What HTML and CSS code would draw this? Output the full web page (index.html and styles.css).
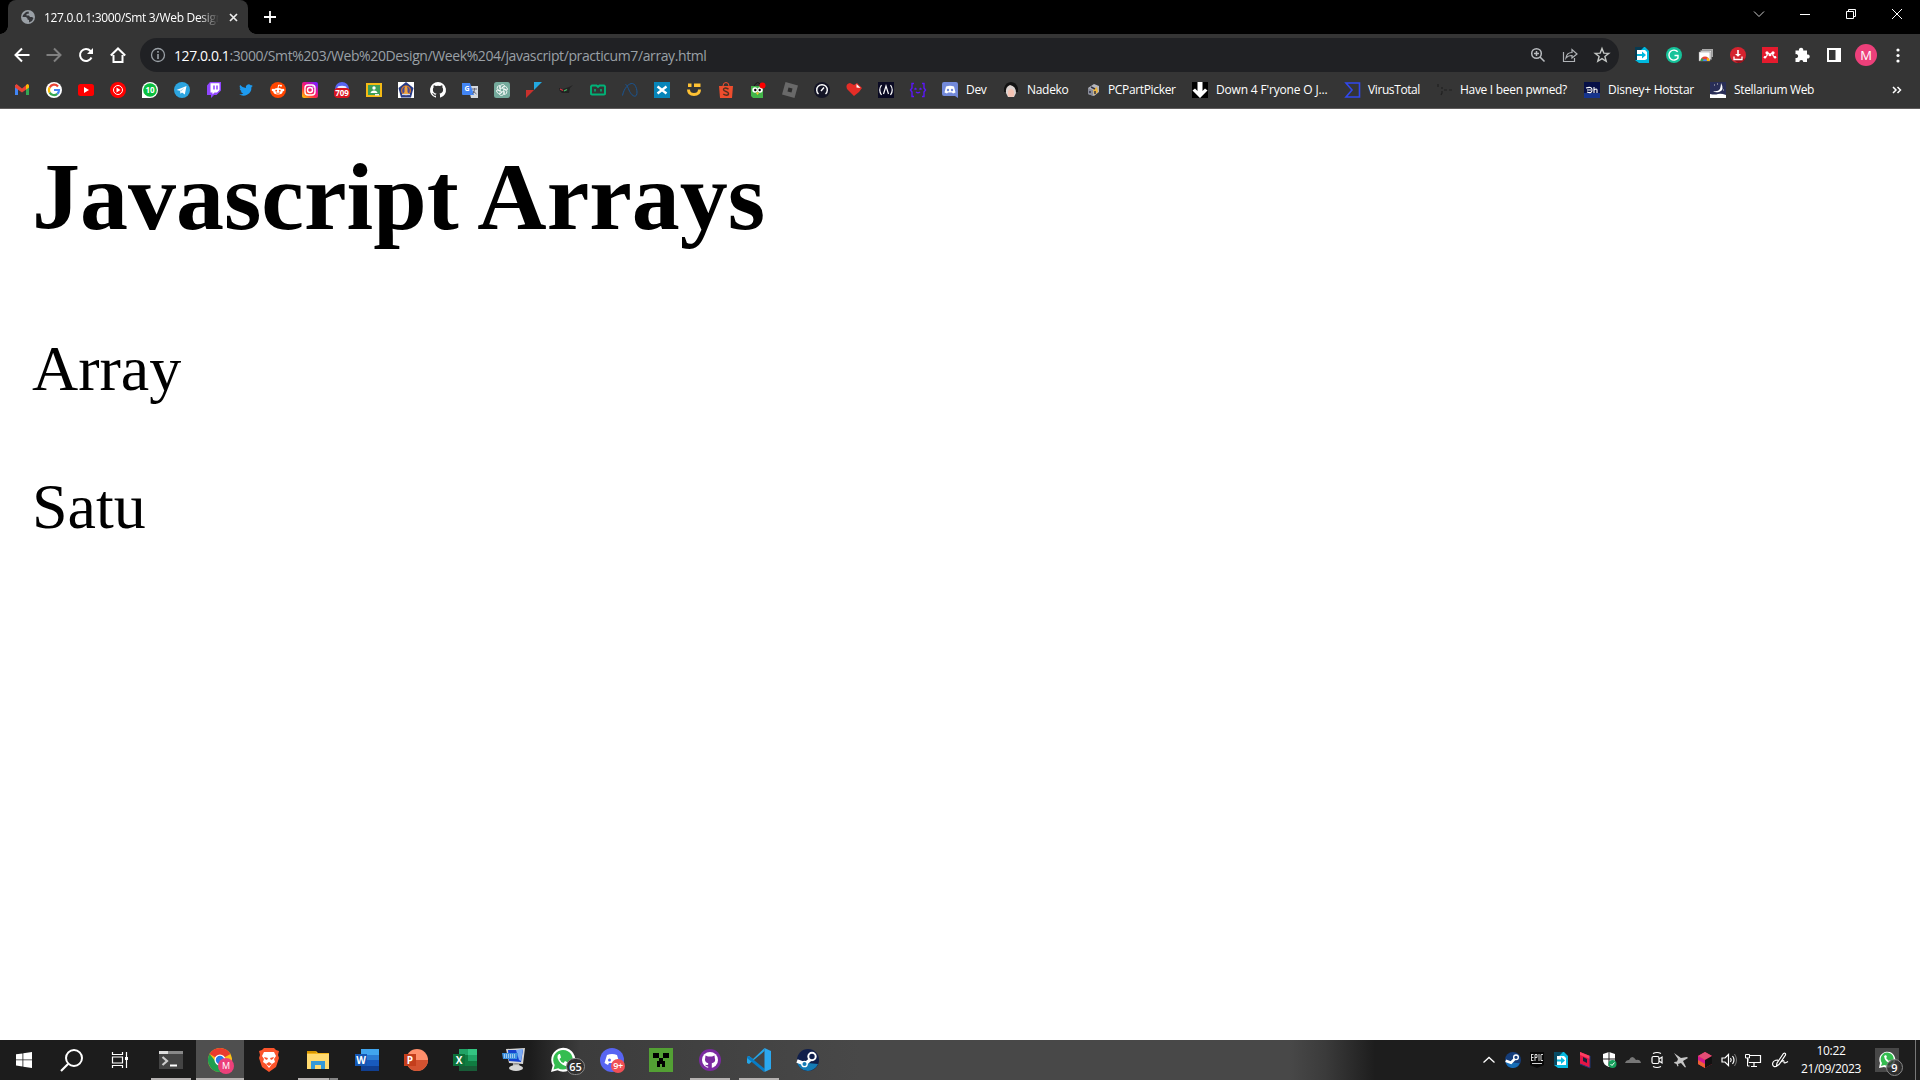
FILE: index.html
```html
<!DOCTYPE html>
<html lang="en">
<head>
<meta charset="utf-8">
<title>Javascript Arrays</title>
<link rel="stylesheet" href="styles.css">
</head>
<body>
<header class="tabstrip">
  <div class="tab">
    <svg class="i14" viewBox="0 0 14 14"><circle cx="7" cy="7" r="7" fill="#9aa0a6"/><path d="M7.500 1.500 5 2 2 5 1.500 7H5l1.500 1.500v1L8 10v2.500l3-1.500 1.500-3-1.500-1H9L8 5.500H5.500V4L8 3.500z" fill="#35363a"/></svg>
    <span class="tab-title">127.0.0.1:3000/Smt 3/Web Design</span>
    <svg class="i9" viewBox="0 0 9 9"><path d="m1 1 7 7M8 1 1 8" stroke="#eee" stroke-width="1.700"/></svg>
  </div>
  <svg class="plus" viewBox="0 0 12 12"><path d="M6 0v12M0 6h12" stroke="#fff" stroke-width="1.800"/></svg>
  <div class="window-controls">
    <svg viewBox="0 0 12 12"><path d="m1 3.500 5 5 5-5" fill="none" stroke="#ccc"/></svg>
    <svg viewBox="0 0 12 12"><path d="M1 6.500h10" stroke="#fff"/></svg>
    <svg viewBox="0 0 12 12"><path d="M1.500 3.500h7v7h-7zM3.500 3V1.500h7v7H9" fill="none" stroke="#fff"/></svg>
    <svg viewBox="0 0 12 12"><path d="m1 1 10 10M11 1 1 11" stroke="#fff"/></svg>
  </div>
</header>
<nav class="toolbar">
  <div class="nav-buttons">
    <svg viewBox="0 0 16 16"><path d="M15.500 8H2M8 1.500 1.500 8 8 14.500" fill="none" stroke="#fff" stroke-width="2"/></svg>
    <svg viewBox="0 0 16 16"><path d="M.5 8H14M8 1.500 14.500 8 8 14.500" fill="none" stroke="#808080" stroke-width="2"/></svg>
    <svg viewBox="0 0 16 16"><path d="M13.500 10.500A6 6 0 1 1 12.500 4L14 5.500" fill="none" stroke="#fff" stroke-width="2"/><path d="M15 1v6H9z" fill="#fff"/></svg>
    <svg viewBox="0 0 16 16"><path d="M3.500 8v7h9V8M.8 8.500 8 1.500l7.200 7" fill="none" stroke="#fff" stroke-width="2"/></svg>
  </div>
  <div class="omnibox">
    <svg class="i16" viewBox="0 0 16 16"><circle cx="8" cy="8" r="6.500" fill="none" stroke="#9aa0a6" stroke-width="1.300"/><path d="M8 7v5M8 4v1.700" stroke="#9aa0a6" stroke-width="1.600"/></svg>
    <span class="url"><b>127.0.0.1</b>:3000/Smt%203/Web%20Design/Week%204/javascript/practicum7/array.html</span>
    <div class="omni-actions">
      <svg viewBox="0 0 16 16"><circle cx="6.500" cy="6.500" r="4.800" fill="none" stroke="#b8bbbf" stroke-width="1.500"/><path d="m10 10 4.500 4.500M4 6.500h5M6.500 4v5" stroke="#b8bbbf" stroke-width="1.500"/></svg>
      <svg viewBox="0 0 16 16"><path d="M1.500 5v9.500h11V11M4 11c.5-4 2.500-5.500 6-5.500V2.500L15 7l-5 4V8.500c-3 0-4.500.5-6 2.500z" fill="none" stroke="#b0b3b7" stroke-width="1.200"/></svg>
      <svg viewBox="0 0 16 16"><path d="m8 1.500 1.800 4.600 5 .3-3.900 3.100 1.300 4.800L8 11.600l-4.200 2.700 1.300-4.800-3.900-3.100 5-.3z" fill="none" stroke="#c4c7c5" stroke-width="1.400"/></svg>
    </div>
  </div>
  <div class="extensions">
    <svg viewBox="0 0 16 16"><path d="M1 0h10l4 4v12H5l-4-3z" fill="#00b9df"/><path d="M1 0h9L5 5v8H1z" fill="#073b52"/><path d="M3 3h8l2 2v7l-2 1H3z" fill="#fff"/><path d="M3 7h5V4.500L12 8l-4 3.500V9H3z" fill="#00b9df"/></svg>
    <svg viewBox="0 0 16 16"><circle cx="8" cy="8" r="8" fill="#15c39a"/><path d="M11.700 4.800A5 5 0 1 0 12 11V8.500H8.500" fill="none" stroke="#fff" stroke-width="1.400"/></svg>
    <svg viewBox="0 0 16 16"><path d="M4 2h11v8H4z" fill="#aaa"/><path d="M2.500 3.500h11v9h-11z" fill="#ddd" stroke="#777" stroke-width=".5"/><path d="M1 5h11v9H1z" fill="#fff" stroke="#888" stroke-width=".5"/><path d="M2.500 14a4.500 4.500 0 0 1 9 0z" fill="#ea4335"/><path d="M2.500 14a4 4 0 0 1 1.500-3l3 3z" fill="#34a853"/><path d="M8 14l1.500-3.500a4 4 0 0 1 2 3.500z" fill="#fbbc05"/><path d="M5 14a2 2 0 0 1 4 0z" fill="#4285f4"/></svg>
    <svg viewBox="0 0 16 16"><circle cx="8" cy="8" r="8" fill="#d5232f"/><path d="m12 11 3 1a8 8 0 0 1-7 4l-4-3z" fill="#920e18"/><path d="M7.200 3h1.600v4H11L8 9.800 5 7h2.200z" fill="#fff"/><path d="M4 9.500v3h8v-3" fill="none" stroke="#fff" stroke-width="1.300"/></svg>
    <svg viewBox="0 0 16 16"><path d="M0 0h16v16H0z" fill="#e51b2e"/><circle cx="5" cy="5.800" r="1.600" fill="#fff"/><circle cx="11" cy="5.800" r="1.600" fill="#fff"/><circle cx="8" cy="7.800" r="1.500" fill="#fff"/><circle cx="3" cy="10.300" r="1.300" fill="#fff"/><circle cx="13" cy="10.300" r="1.300" fill="#fff"/><path d="M5 6q1 3-2 4M11 6q-1 3 2 4M5 6q2 0 3 2 1-2 3-2" fill="none" stroke="#fff" stroke-width="1.200"/></svg>
    <svg viewBox="0 0 16 16"><path d="M1.500 3.500H5a2.200 2.200 0 1 1 4.200 0H13v4a2.100 2.100 0 1 1 0 4V15H9.300a2 2 0 1 0-4 0H1.500v-4a2 2 0 1 0 0-3.800z" fill="#fff"/></svg>
    <svg viewBox="0 0 16 16"><path d="M2 2h12v12H2z" fill="none" stroke="#fff" stroke-width="2"/><path d="M9.500 2H14v12H9.500z" fill="#fff"/></svg>
    <span class="avatar">M</span>
    <svg viewBox="0 0 16 16" fill="#fff"><circle cx="8" cy="3" r="1.600"/><circle cx="8" cy="8.500" r="1.600"/><circle cx="8" cy="14" r="1.600"/></svg>
  </div>
</nav>
<nav class="bookmarks">
  <div class="icon-marks">
    <svg viewBox="0 0 16 16"><path d="M1 3h3v10H1z" fill="#4285f4"/><path d="M12 3h3v10h-3z" fill="#34a853"/><path d="M1 3.500 2.500 2 8 6.500 13.500 2 15 3.500v2L8 10.500l-7-5z" fill="#ea4335"/><path d="M12 5V3l2-1 1 1.500v2L12 7.500z" fill="#fbbc04"/></svg>
    <svg viewBox="0 0 16 16"><circle cx="8" cy="8" r="8" fill="#fff"/><g fill="none" stroke-width="2.200"><path d="M12 4.500a5 5 0 0 0-8.300.9" stroke="#ea4335"/><path d="M3.700 5.400a5 5 0 0 0 0 5.200" stroke="#fbbc05"/><path d="M3.700 10.600a5 5 0 0 0 7.600 1.200" stroke="#34a853"/><path d="M11.300 11.800A5 5 0 0 0 13 8H8" stroke="#4285f4"/></g></svg>
    <svg viewBox="0 0 16 16"><rect y="2" width="16" height="12" rx="2.500" fill="#f00"/><path d="m6 5 5 3-5 3z" fill="#fff"/></svg>
    <svg viewBox="0 0 16 16"><circle cx="8" cy="8" r="8" fill="#f00"/><circle cx="8" cy="8" r="4.500" fill="none" stroke="#fff"/><path d="m6.500 5.500 4 2.500-4 2.500z" fill="#fff"/></svg>
    <svg viewBox="0 0 16 16"><path d="M0 16V8A8 8 0 1 1 8 16z" fill="#fff"/><circle cx="8" cy="8" r="6.800" fill="#0abf3f"/><text class="badge-text" x="8" y="10.800" font-size="8">10</text></svg>
    <svg viewBox="0 0 16 16"><circle cx="8" cy="8" r="8" fill="#2ca5e0"/><path d="m2.500 8 10-4-1.700 8.500L8 10.500l-1.500 1.300-.5-3z" fill="#fff"/><path d="m6 8.800 4.500-3L7 9.500" fill="#9ccfe8"/></svg>
    <svg viewBox="0 0 16 16"><path d="M1 3.500 4 0h11v8.500L10.500 13H8l-3 3v-3H1z" fill="#9146ff"/><path d="M4.500 1.200h9V8l-2.500 2.500H8.500l-2 2v-2h-2z" fill="#fff"/><path d="M8 3.500v4M11 3.500v4" stroke="#9146ff" stroke-width="1.500"/></svg>
    <svg viewBox="-2 -2 28 28"><path d="M24 4.600a10 10 0 0 1-2.800.8 5 5 0 0 0 2.100-2.700 10 10 0 0 1-3.100 1.200 4.900 4.900 0 0 0-8.400 4.500A14 14 0 0 1 1.700 3.200a4.900 4.900 0 0 0 1.500 6.500 5 5 0 0 1-2.200-.6c0 2.300 1.500 4.400 3.900 4.900a5 5 0 0 1-2.200.1 4.900 4.900 0 0 0 4.600 3.400A9.900 9.900 0 0 1 0 19.500 14 14 0 0 0 21.500 7a10 10 0 0 0 2.500-2.400z" fill="#1d9bf0"/></svg>
    <svg viewBox="0 0 16 16"><circle cx="8" cy="8" r="8" fill="#ff4500"/><ellipse cx="8" cy="9.300" rx="4.700" ry="3.300" fill="#fff"/><circle cx="3" cy="8" r="1.300" fill="#fff"/><circle cx="13" cy="8" r="1.300" fill="#fff"/><path d="m8 6 .6-3 2.400.6" fill="none" stroke="#fff"/><circle cx="11" cy="3.700" r="1" fill="#fff"/><circle cx="6.200" cy="8.700" r=".9" fill="#ff4500"/><circle cx="9.800" cy="8.700" r=".9" fill="#ff4500"/><path d="M6 10.800q2 1.200 4 0" fill="none" stroke="#ff4500" stroke-width=".8"/></svg>
    <svg viewBox="0 0 16 16"><defs><linearGradient id="ig" x1="0" y1="1" x2=".8" y2="0"><stop stop-color="#ffd600"/><stop offset=".4" stop-color="#ff3040"/><stop offset=".7" stop-color="#e0109c"/><stop offset="1" stop-color="#7a20ff"/></linearGradient></defs><rect width="16" height="16" rx="2" fill="url(#ig)"/><rect x="3" y="3" width="10" height="10" rx="3" fill="none" stroke="#fff" stroke-width="1.400"/><circle cx="8" cy="8" r="2.500" fill="none" stroke="#fff" stroke-width="1.400"/><circle cx="11" cy="5" r=".7" fill="#fff"/></svg>
    <svg viewBox="0 0 16 16"><circle cx="8" cy="7" r="7" fill="#5865f2"/><path d="M4 4.500q4-1.500 8 0l1 2H3z" fill="#eef"/><rect y="6" width="16" height="10" rx="4" fill="#d9131e"/><text class="badge-text" x="8" y="13.700" font-size="8">709</text></svg>
    <svg viewBox="0 0 16 16"><path d="M0 1h16v14H0z" fill="#f5ba15"/><path d="M2 3h12v10H2z" fill="#3f9e58"/><circle cx="8" cy="6" r="1.700" fill="#fff"/><path d="M4.500 11q.5-2.500 3.500-2.500t3.500 2.500z" fill="#fff"/><path d="M9 12h4v1.500H9z" fill="#eee"/></svg>
    <svg viewBox="0 0 16 16"><path d="M0 0h16v16H0z" fill="#fff"/><path d="m8 0 7.500 6L13 15.500H3L.5 6z" fill="#273b87"/><circle cx="8" cy="8.500" r="5" fill="#d5792c"/><circle cx="8" cy="8.500" r="3.800" fill="#4c4a94"/><path d="m8 3 1.500 3v4l1.500 2H5l1.500-2V6z" fill="#f0a43c"/><path d="M4 12.500h8" stroke="#cad6f2" stroke-width="1.200"/></svg>
    <svg viewBox="0 0 16 16"><path d="M8 0a8 8 0 0 0-2.500 15.600c.4 0 .5-.2.500-.4v-1.500c-2.200.5-2.700-1-2.700-1-.4-.9-.9-1.200-.9-1.200-.7-.5.1-.5.1-.5.800.1 1.200.8 1.200.8.700 1.300 1.900.9 2.300.7.100-.5.300-.9.500-1.100-1.800-.2-3.600-.9-3.600-4 0-.9.300-1.600.8-2.100-.1-.2-.4-1 .1-2.100 0 0 .7-.2 2.200.8a7.500 7.500 0 0 1 4 0c1.500-1 2.200-.8 2.200-.8.400 1.100.2 1.900.1 2.100.5.600.8 1.300.8 2.100 0 3.100-1.900 3.800-3.700 4 .3.300.6.800.6 1.500v2.300c0 .2.100.5.500.4A8 8 0 0 0 8 0z" fill="#fff"/></svg>
    <svg viewBox="0 0 16 16"><path d="M6 4h10v12H9z" fill="#d5d8dd"/><path d="M0 1h8l4 12H1q-1 0-1-1z" fill="#4285f4"/><text class="badge-text" x="5" y="9" font-size="7">G</text><path d="M10 7h5M12.500 6v1q0 3-2 5M11 9l3.500 3" stroke="#667" fill="none"/></svg>
    <svg viewBox="0 0 16 16"><rect width="16" height="16" rx="2.500" fill="#74aa9c"/><g fill="none" stroke="#fff" stroke-width=".8"><path id="petal" d="M6.200 9V5q0-2.500 2.300-2.500 1.500 0 2.200 1.300L8 5.500"/><use href="#petal" transform="rotate(60 8 8)"/><use href="#petal" transform="rotate(120 8 8)"/><use href="#petal" transform="rotate(180 8 8)"/><use href="#petal" transform="rotate(240 8 8)"/><use href="#petal" transform="rotate(300 8 8)"/></g></svg>
    <svg viewBox="0 0 16 16"><path d="M8 0h8L8 8z" fill="#23a9e1"/><path d="M0 8h8l-8 8z" fill="#c9302c"/></svg>
    <svg viewBox="0 0 16 16"><path d="m1 6 4 1 6-2 4-2-3 3-1 5H4L1 8z" fill="#222"/><path d="m2 7 3 1.500" stroke="#d34" stroke-width="1.300"/><path d="m6 9 3-1.500" stroke="#4b6" stroke-width="1.300"/></svg>
    <svg viewBox="0 0 16 16"><path d="M2 3.500h4.500L8 5l1.500-1.500H14l1 1V12l-1 .5H2L1 12V4.500z" fill="none" stroke="#00b277" stroke-width="1.900"/><path d="M5 7v2.500M11 7v2.500" stroke="#00b277" stroke-width="1.500"/></svg>
    <svg viewBox="0 0 16 16"><path d="M.5 13.500C2 6 7 1 10.500 1.500S16 10 14.500 13 9 13 7 8 4 3 3.500 2" fill="none" stroke="#1a5592" stroke-width="1"/></svg>
    <svg viewBox="0 0 16 16"><path d="M0 0h16v16H0z" fill="#0785b9"/><path d="M3.500 4.500 8 8l4.500-3.500M3.500 11.500 8 8l4.500 3.500" fill="none" stroke="#fff" stroke-width="2.400"/></svg>
    <svg viewBox="0 0 16 16"><path d="M2 1.500h3.500V5H2zM8 1.500h6.500V5H8z" fill="#ffc233"/><path d="M2.500 7.500q0 5 5.500 5t5.500-5" fill="none" stroke="#ffc233" stroke-width="3"/></svg>
    <svg viewBox="0 0 16 16"><path d="M1 4h14l-1 12H2z" fill="#ee4d2d"/><path d="M5 4q0-3.500 3-3.500T11 4" fill="none" stroke="#ee4d2d"/><path d="M10.500 7q-5-2-5 .5c0 2.500 5 1.500 5 4s-3.500 2-5.200.5" fill="none" stroke="#503020" stroke-width="1.500"/></svg>
    <svg viewBox="0 0 16 16"><path d="M4 4q4-7 7 0" fill="none" stroke="#151515"/><path d="M1 4h12v12H3l-2-2z" fill="#42b549"/><circle cx="5" cy="8" r="2.700" fill="#fff"/><circle cx="10" cy="8" r="2.700" fill="#fff"/><circle cx="5.300" cy="8" r="1.200"/><circle cx="9.700" cy="8" r="1.200"/><path d="m6 11 1.500-1L9 11l-1.500 2z" fill="#ffbe2e"/><circle cx="12.500" cy="3.500" r="3" fill="#f00"/></svg>
    <svg viewBox="0 0 16 16"><path d="m3.500 0 12.500 3.500L12.500 16 0 12.500z" fill="#696969"/><path d="m6.500 5.500 4 1-1 4-4-1z" fill="#2d2d2d"/></svg>
    <svg viewBox="0 0 16 16"><circle cx="8" cy="8" r="8" fill="#141526"/><path d="M4.500 12a5.300 5.300 0 1 1 7 0M7 9l3-3.500" fill="none" stroke="#fff" stroke-width="1.400"/></svg>
    <svg viewBox="0 0 16 16"><path d="M8 14 1 7Q-1 2 4 1l4 2 3-2 5 5-3 4z" fill="#e52d27"/><path d="m10.500 2 4 4-4-.5z" fill="#fff"/></svg>
    <svg viewBox="0 0 16 16"><path d="M0 0h16v16H0z" fill="#0a0a23"/><path d="M3.500 3q-3.500 5 0 10M12.500 3q3.500 5 0 10M5.500 12 8 4l2.500 8" fill="none" stroke="#fff" stroke-width="1.200"/></svg>
    <svg viewBox="0 0 16 16"><path d="M4 1.500H2v4.500L.5 8 2 10v4.500h2M12 1.500h2v4.500L15.500 8 14 10v4.500h-2M4.500 7.500l1-1 1 1M9.500 7.500l1-1 1 1M6 10q2 1.500 4 0" fill="none" stroke="#5b16f8" stroke-width="1.400"/></svg>
  </div>
  <div class="named-marks">
    <a><svg viewBox="0 0 16 16"><path d="M2 0h12q2 0 2 2v14l-3-2H2q-2 0-2-2V2q0-2 2-2z" fill="#7289da"/><path d="M4 4.500q4-1.500 8 0l1.500 6-2.500 1-1-1H6l-1 1-2.500-1z" fill="#fff"/><circle cx="6" cy="8" r="1.200" fill="#7289da"/><circle cx="10" cy="8" r="1.200" fill="#7289da"/></svg><span class="m-dev">Dev</span></a>
    <a><svg viewBox="0 0 16 16"><path d="M1 10V6q2-6 7-6t7 6v4z" fill="#121212"/><path d="M3 11q-1-6 4-8 6 1 6 8l-2 4H5z" fill="#ddd3d0"/><path d="M5 9q3-4 6 0v5q-3 2-6 0z" fill="#f5c3b3"/></svg><span class="m-nad">Nadeko</span></a>
    <a class="tight"><svg viewBox="0 0 16 16"><path d="m2 6 6-4 5 2v6l-5 4-6-2z" fill="#b3b5bd"/><path d="m2 6 5 2v6l-5-2z" fill="#888b98"/><path d="m7 7 4-2 1 5-4 3z" fill="#edb43c"/><path d="M4 9v2M9 9v3M5 5l4 2" stroke="#303348" fill="none" stroke-width="1.500"/></svg><span class="m-pcp">PCPartPicker</span></a>
    <a><svg viewBox="0 0 16 16"><path d="M0 0h16v16H0z" fill="#000"/><path d="M5.500 0h5v9L13 6.500l2.500 2L8 16 .5 8.500l2.500-2L5.500 9z" fill="#fff"/></svg><span class="m-dwn">Down 4 F'ryone O J...</span></a>
    <a><svg viewBox="0 0 16 16"><path d="M2 1h13.500v14H2l6-7z" fill="none" stroke="#3148ed" stroke-width="1.600"/></svg><span class="m-vir">VirusTotal</span></a>
    <a><svg viewBox="0 0 16 16"><path d="M2 2v3M6 5v2M6 9v2l-1 2M8 8h3M13 8h3" stroke="#202020" stroke-width="1.200" fill="none"/></svg><span class="m-pwn">Have I been pwned?</span></a>
    <a><svg viewBox="0 0 16 16"><path d="M0 0h16v16H0z" fill="#071047"/><path d="M0 11h16v5H0z" fill="#16348c"/><path d="M2 6q6-2 6 2t-5 2M3 8h4M10 5v6M10 8q3-2 3 0v3" fill="none" stroke="#fff" stroke-width="1.100"/></svg><span class="m-dis">Disney+ Hotstar</span></a>
    <a><svg viewBox="0 0 16 16"><path d="M0 0h16v16H0z" fill="#292e57"/><path d="M0 12q5 1 8 0t8 1v3H0z" fill="#fff"/><path d="M11 1q4 7-2 9-4 1-6-1 5 1 7-2 1-3 1-6z" fill="#fff"/><path d="M4 3h1M7 2h1M13 8h1" stroke="#ccc"/></svg><span class="m-ste">Stellarium Web</span></a>
  </div>
  <svg class="more" viewBox="0 0 10 8"><path d="m1 1 3 3-3 3M5.500 1l3 3-3 3" fill="none" stroke="#fff" stroke-width="1.500"/></svg>
</nav>
<main class="page">
  <h1>Javascript Arrays</h1>
  <p>Array</p>
  <p>Satu</p>
</main>
<footer class="taskbar">
  <div class="system">
    <svg class="i16" viewBox="0 0 16 16"><path d="m0 2.300 6.500-.9v6.100H0zM7.300 1.300 16 0v7.500H7.300zM0 8.300h6.500v6.200L0 13.600zM7.300 8.300H16V16l-8.700-1.300z" fill="#fff"/></svg>
    <svg class="i24" viewBox="0 0 24 24"><circle cx="14" cy="10" r="8" fill="none" stroke="#fff" stroke-width="2"/><path d="m8 16-7 7" stroke="#fff" stroke-width="2.200"/></svg>
    <svg class="i16" viewBox="0 0 16 16"><path d="M.5 0v2.500h10V0M.5 5h10v6H.5zM.5 16v-2.500h10V16M14.500 0v16" fill="none" stroke="#fff" stroke-width="1.200"/><path d="M13 5h3v3h-3z" fill="#fff"/></svg>
  </div>
  <div class="apps">
    <div class="app open"><svg viewBox="0 0 24 24"><path d="M0 3h24v18H0z" fill="#444"/><path d="M0 3h24v3H0z" fill="#888"/><path d="M0 3h9v3H0z" fill="#ddd"/><path d="m3.500 9 4.500 4-4.500 4" fill="none" stroke="#ccc" stroke-width="2.200"/><path d="M11 17.500h7" stroke="#fff" stroke-width="2"/></svg></div>
    <div class="app open active"><svg viewBox="0 0 24 24"><circle cx="12" cy="12" r="12" fill="#fbc116"/><path d="M12 12 1.600 6A12 12 0 0 1 22.400 6z" fill="#ea3b2e"/><path d="M1.600 6A12 12 0 0 0 12 24l5-9-9-1z" fill="#1f9e50"/><circle cx="12" cy="12" r="5.500" fill="#fff"/><circle cx="12" cy="12" r="4.200" fill="#287ae6"/></svg><span class="profile">M</span></div>
    <div class="app"><svg viewBox="0 0 24 24"><path d="M7 0h10l2 2 3 1-1 4 1 3-3 9-7 5-7-5-3-9 1-3-1-4 3-1z" fill="#fb542b"/><path d="M12 4 7 4 5 8l2 3-1 3 3 2 3 4 3-4 3-2-1-3 2-3-2-4z" fill="#fff"/><path d="m7 9 4 1-1 2-2-1zM17 9l-4 1 1 2 2-1zM9 16l3-2 3 2-3 2z" fill="#fb542b"/></svg></div>
    <div class="app open grouped"><svg viewBox="0 0 24 24"><path d="M1 3h9l2 2h11v16H1z" fill="#f3b51e"/><path d="M1 6h22v15H1z" fill="#ffda70"/><path d="M1 3h9v2H1z" fill="#d69600"/><path d="M5 13h14v8h-4v-4H9v4H5z" fill="#3499d9"/></svg></div>
    <div class="app"><svg viewBox="0 0 24 24"><path d="M6 1h18v22H6z" fill="#185abd"/><path d="M6 1h18v6H6z" fill="#41a5ee"/><path d="M6 7h18v5H6z" fill="#2b7cd3"/><path d="M6 18h18v5H6z" fill="#103f91"/><path d="M0 6h12v12H0z" fill="#1558b5"/><text class="badge-text" x="6" y="15.500" font-size="10">W</text></svg></div>
    <div class="app"><svg viewBox="0 0 24 24"><circle cx="13" cy="12" r="11" fill="#ff8f6b"/><path d="M2 12h22a11 11 0 0 1-22 0z" fill="#d35230"/><path d="M0 6h12v12H0z" fill="#c43e1c"/><text class="badge-text" x="6" y="15.500" font-size="10">P</text></svg></div>
    <div class="app"><svg viewBox="0 0 24 24"><path d="M6 1h18v22H6z" fill="#107c41"/><path d="M6 1h9v6H6z" fill="#21a366"/><path d="M15 1h9v6h-9z" fill="#33c481"/><path d="M15 7h9v6h-9z" fill="#21a366"/><path d="M6 18h18v5H6z" fill="#185c37"/><path d="M0 6h12v12H0z" fill="#0d7139"/><text class="badge-text" x="6" y="15.500" font-size="10">X</text></svg></div>
    <div class="app"><svg viewBox="0 0 24 24"><path d="M4 1 23 0l-2 16-14-1z" fill="#d5d5d5"/><path d="M6 2h15l-2 12-12-1z" fill="#1442cf"/><path d="m14 2 7-1-2 12-2-1z" fill="#7aabf5"/><path d="M0 5h16l-1 6H1z" fill="#3c90df"/><path d="M2 7h12M2 9h11" stroke="#fff" stroke-dasharray="1 1"/><path d="m11 15 6 1 1 3h-7z" fill="#aaa"/><ellipse cx="14" cy="20" rx="7" ry="3" fill="#d5d5d5"/></svg></div>
    <div class="app"><svg viewBox="0 0 24 24"><path d="M0 24 1.700 17.500A12 12 0 1 1 6.500 22.300z" fill="#fff"/><path d="m2.500 21.500 1.200-4.500a9.800 9.800 0 1 1 3.500 3.300z" fill="#35bd50"/><path d="M8 6q-2 1-1.500 4 2 6 8 8 3 0 3.500-3l-4-2-1.500 2q-3-1-4-4l1.500-1.500L9 6z" fill="#fff"/></svg><span class="count">65</span></div>
    <div class="app"><svg viewBox="0 0 24 24"><circle cx="12" cy="12" r="12" fill="#5865f2"/><path d="M7 7q5-2 10 0l2.500 8-3.500 2-1-2H9l-1 2-3.500-2z" fill="#fff"/><circle cx="9.500" cy="12" r="1.500" fill="#5865f2"/></svg><span class="alert">9+</span></div>
    <div class="app"><svg viewBox="0 0 24 24"><path d="M0 0h24v24H0z" fill="#53a034"/><path d="M4 5h6v5H4zM14 5h6v5h-6zM10 10h4v3h2v6h-3v-3h-2v3H8v-6h2z" fill="#000"/></svg></div>
    <div class="app open"><svg viewBox="0 0 24 24"><circle cx="12" cy="12" r="11" fill="#7b2aa0"/><circle cx="12" cy="12" r="8" fill="#fff"/><path d="M7.500 7.500 10 8.500h4l2.500-1 .3 2.500q1.500 4.500-3 5.200V21h-3.600v-2.500q-2.500.3-3.200-2 1.700 1 3.200 0v-1.300Q6 14 7.200 10z" fill="#7b2aa0"/></svg></div>
    <div class="app open"><svg viewBox="0 0 24 24"><path d="M17.500 0 6 11 2 8 0 9v6l2 1L17.500 3z" fill="#25a6e8"/><path d="m0 9 2-1 16 13-1 3L0 10z" fill="#087cc5"/><path d="M17.500 0 24 3v18l-6.500 3z" fill="#2ba8ef"/></svg></div>
    <div class="app"><svg viewBox="0 0 24 24"><circle cx="12" cy="12" r="11" fill="#101f4b"/><path d="M1 14a11 11 0 0 0 21 2z" fill="#147bb5"/><path d="m1 13 8 3 6-5" fill="none" stroke="#fff" stroke-width="3.500"/><circle cx="16" cy="8.500" r="3.700" fill="#101f4b" stroke="#fff" stroke-width="2"/><circle cx="8.500" cy="16" r="2.700" fill="#147bb5" stroke="#fff" stroke-width="1.300"/></svg></div>
  </div>
  <div class="tray">
    <svg viewBox="0 0 16 16"><path d="m2.500 10.500 5.500-5 5.500 5" fill="none" stroke="#fff" stroke-width="1.300"/></svg>
    <svg viewBox="0 0 24 24"><circle cx="12" cy="12" r="12" fill="#153d7a"/><path d="M1 15a11 11 0 0 0 21 2z" fill="#176db6"/><path d="m1 13 8 3 6-6" fill="none" stroke="#fff" stroke-width="4"/><circle cx="16.500" cy="8" r="3.500" fill="#153d7a" stroke="#fff" stroke-width="2"/></svg>
    <svg viewBox="0 0 16 16"><path d="M1 0h14v13l-7 3-7-3z" fill="#090909"/><path d="M2.500 2v7M2.500 2.500h2M2.500 5.500h2M2.500 8.500h2M6 9V2.500h2v3H6M10 2v7M14 2.500h-2v6h2M3 11.500h10" stroke="#eee" stroke-width=".9" fill="none"/></svg>
    <svg viewBox="0 0 16 16"><path d="M1 0h10l4 4v12H5l-4-3z" fill="#08b9e0"/><path d="M1 0h9L5 5v8H1z" fill="#084b64"/><path d="M4 4h7l2 2v7H4z" fill="#fff"/><path d="M4 7.500h4V5l4 3.500L8 12V9.500H4z" fill="#08b9e0"/></svg>
    <svg viewBox="0 0 16 16"><path d="m3 0 10 4v12L3 12z" fill="#e41646"/><path d="M3 0 13 4V7L3 3z" fill="#ff3e62"/><path d="m6 5 4 2v4L6 9z" fill="#18203c"/><path d="m3 12 10 4V4" fill="none" stroke="#1f397b"/></svg>
    <svg viewBox="0 0 16 16"><path d="m8 0 6 2v6q0 5-6 7-6-2-6-7V2z" fill="#fff"/><path d="M8 0v14M2 7h12" stroke="#222"/><circle cx="11.500" cy="12" r="4" fill="#16a05c"/><path d="m9.500 12 1.500 1.500 2.500-3" fill="none" stroke="#fff"/></svg>
    <svg viewBox="0 0 16 16"><path d="M0 11q1-3 4-3 3-6 7 0 4-1 5 3z" fill="#777"/></svg>
    <svg viewBox="0 0 16 16"><rect x="3" y="4.500" width="7" height="7" rx="1.500" fill="none" stroke="#fff" stroke-width="1.200"/><path d="m10 7 3-2v6l-3-2M4 1.500q4-2 8 0M4 14.500q4 2 8 0" fill="none" stroke="#fff" stroke-width="1.200"/></svg>
    <svg viewBox="0 0 16 16"><path d="m1 1 7 5 6-1 1 1-5 3 3 6-1 .5L8 11l-3 1 .5 2-1 .5L3.500 12 1 11l.5-1 2.500-.5L5 7z" fill="#c5c5c5"/></svg>
    <svg viewBox="0 0 16 16"><path d="m8 0 7 4v8l-7 4-7-4V4z" fill="#ed294d"/><path d="m8 0 7 4-7 4-7-4z" fill="#e44d75"/><path d="M1 4v8l7 4V8z" fill="#f06034"/><path d="M1 4v4l7 4V8z" fill="#d31893"/><path d="M8 8v8l7-4V4z" fill="#111"/></svg>
    <svg viewBox="0 0 16 16"><path d="M1 6h3l3.500-3.500v11L4 10H1zM9.500 6q1.500 2 0 4M11.500 4q3 4 0 8" fill="none" stroke="#fff" stroke-width="1.200"/><path d="M13.500 2q4 6 0 12" fill="none" stroke="#777"/></svg>
    <svg viewBox="0 0 16 16"><path d="M5 3.500h10.500v7H3V7M9 10.500v3.500M6 14.500h6" fill="none" stroke="#fff" stroke-width="1.200"/><path d="M.5 2.500h4V6h-4zM2.500 6v8h2" fill="#222" stroke="#fff"/></svg>
    <svg class="pen" viewBox="0 0 16 16"><path d="m5 11 6.500-9.500q2.500-1 2 1.500L7 12.500l-2.500 1.500zM6 8q-5 0-5.500 4 .5 4 5 2M9.500 10q2.500-3 2.500 0 0 2 4-.5" fill="none" stroke="#fff" stroke-width="1.200"/></svg>
  </div>
  <div class="clock"><span>10:22</span><span>21/09/2023</span></div>
  <div class="notice"><svg viewBox="0 0 24 24"><path d="M4 20 5 15A8 8 0 1 1 9 19z" fill="#fff"/><path d="m6 18 1-3a6.500 6.500 0 1 1 2.500 2z" fill="#35bd50"/><path d="M9 8q1 6 6 7l2-2-2-1-1 1-3-3 1-1-1-2z" fill="#fff"/></svg><span class="count">9</span></div>
  <div class="peek"></div>
</footer>
</body>
</html>
```

FILE: styles.css
```css
* { box-sizing: border-box; }
body { margin: 0; width: 1920px; height: 1080px; overflow: hidden; display: flex; flex-direction: column; background: #fff; font-family: "Open Sans", "Noto Sans", sans-serif; color: #fff; }
svg { display: block; width: 16px; height: 16px; flex: none; overflow: visible; }
.i14 { width: 14px; height: 14px; }
.i9 { width: 9px; height: 9px; }
.i16 { width: 16px; height: 16px; }
.i24 { width: 24px; height: 24px; }
.badge-text { fill: #fff; font-family: "Open Sans", sans-serif; font-weight: 700; text-anchor: middle; }

.tabstrip { height: 34px; flex: none; display: flex; align-items: center; background: #000; padding-left: 8px; }
.tab { position: relative; width: 240px; height: 34px; display: flex; align-items: center; padding: 0 11px 0 13px; background: #353535; border-radius: 8px 8px 0 0; }
.tab::before, .tab::after { content: ""; position: absolute; bottom: 0; width: 8px; height: 8px; }
.tab::before { left: -8px; background: radial-gradient(circle at 0 0, transparent 7.5px, #353535 8px); }
.tab::after { right: -8px; background: radial-gradient(circle at 100% 0, transparent 7.5px, #353535 8px); }
.tab-title { width: 176px; margin: 0 9px 0 9px; white-space: nowrap; font-size: 12px; letter-spacing: -.31px; -webkit-mask-image: linear-gradient(90deg, #000 155px, transparent 175px); mask-image: linear-gradient(90deg, #000 155px, transparent 175px); }
.plus { width: 12px; height: 12px; margin-left: 16px; }
.window-controls { margin-left: auto; display: grid; grid-template-columns: repeat(4, 46px); justify-items: center; height: 28px; align-items: center; align-self: flex-start; }
.window-controls svg { width: 12px; height: 12px; }

.toolbar { height: 42px; flex: none; display: flex; align-items: center; background: #353535; padding: 0 6px; }
.nav-buttons { display: grid; grid-template-columns: repeat(4, 32px); justify-items: center; width: 134px; }
.omnibox { width: 1480px; height: 34px; display: flex; align-items: center; background: #202124; border-radius: 17px; padding: 0 1px 0 10px; }
.url { margin-left: 8px; font-size: 14px; letter-spacing: -.4px; color: #9aa0a6; white-space: nowrap; }
.url b { font-weight: 400; color: #fff; }
.omni-actions { margin-left: auto; display: grid; grid-template-columns: repeat(3, 32px); justify-items: center; }
.extensions { margin-left: 7px; display: grid; grid-template-columns: repeat(9, 32px); justify-items: center; align-items: center; }
.avatar { width: 22px; height: 22px; border-radius: 50%; background: #ec407a; font-size: 13px; line-height: 22px; text-align: center; }

.bookmarks { height: 33px; flex: none; display: flex; align-items: center; background: #353535; border-bottom: 1px solid #5f5c5c; padding: 0 18px 4px 6px; font-size: 12px; }
.icon-marks { display: grid; grid-template-columns: repeat(29, 32px); justify-items: center; margin-right: 8px; }
.named-marks { display: grid; grid-template-columns: 61px 83px 106px 152px 92px 148px 126px 110px; white-space: nowrap; letter-spacing: -.3px; }
.named-marks a { display: flex; align-items: center; gap: 8px; line-height: 16px; }
.named-marks .tight { gap: 6px; }
.m-pcp { letter-spacing: -.35px; }
.m-dwn { letter-spacing: -.17px; }
.m-vir { letter-spacing: -.4px; }
.m-dis { letter-spacing: -.23px; }
.m-ste { letter-spacing: -.35px; }
.more { width: 10px; height: 8px; margin-left: auto; }

.page { flex: 1; padding: 33px 32px; background: #fff; color: #000; font-family: "Liberation Serif", "Times New Roman", serif; }
.page h1 { margin: 0 0 80px; font-size: 96px; line-height: 110px; }
.page p { margin: 0 0 64px; font-size: 64px; line-height: 74px; }

.taskbar { height: 40px; flex: none; display: flex; align-items: center; background: linear-gradient(90deg, #1c1c1c 530px, #3c3c3c 580px, #484848 860px, #484848 1290px, #3b3b3b 1325px, #1d1d1d 1375px); }
.system { width: 147px; display: grid; grid-template-columns: repeat(3, 48px); justify-items: center; align-items: center; }
.apps { display: grid; grid-template-columns: repeat(14, 49px); height: 40px; }
.app { position: relative; display: flex; align-items: center; justify-content: center; width: 48px; height: 40px; }
.app svg { width: 24px; height: 24px; }
.app.open::after { content: ""; position: absolute; left: 4px; right: 4px; bottom: 0; height: 2px; background: #b5b2b1; }
.app.active { background: #4f4f4f; }
.app.active::after { left: 0; right: 0; }
.app.grouped::after { background: linear-gradient(90deg, #b5b2b1 31px, #555 31px, #555 32px, #858585 32px); }
.profile { position: absolute; left: 22px; top: 18px; width: 16px; height: 16px; border-radius: 50%; background: #ec407a; font-size: 9px; line-height: 16px; text-align: center; }
.count { position: absolute; left: 27px; top: 18px; min-width: 19px; height: 17px; padding: 0 2px; border: 1px solid #8a8a8a; border-radius: 9px; background: #303030; font-size: 11px; font-weight: 600; line-height: 15px; text-align: center; }
.alert { position: absolute; left: 23px; top: 19px; width: 14px; height: 14px; border-radius: 50%; background: #f04f55; font-size: 9px; line-height: 14px; text-align: center; font-weight: 600; letter-spacing: -.5px; }
.tray { margin-left: auto; display: grid; grid-template-columns: repeat(12, 24px) 30px; justify-items: center; }
.clock { width: 72px; display: flex; flex-direction: column; align-items: center; font-size: 12px; line-height: 18px; letter-spacing: -.35px; }
.notice { position: relative; width: 24px; height: 24px; margin-left: 8px; background: #484848; }
.notice svg { width: 24px; height: 24px; }
.notice .count { left: 11px; top: 11px; width: 17px; min-width: 0; background: #303030cc; }
.peek { width: 5px; height: 40px; margin-left: 16px; border-left: 1px solid #777; }
```
